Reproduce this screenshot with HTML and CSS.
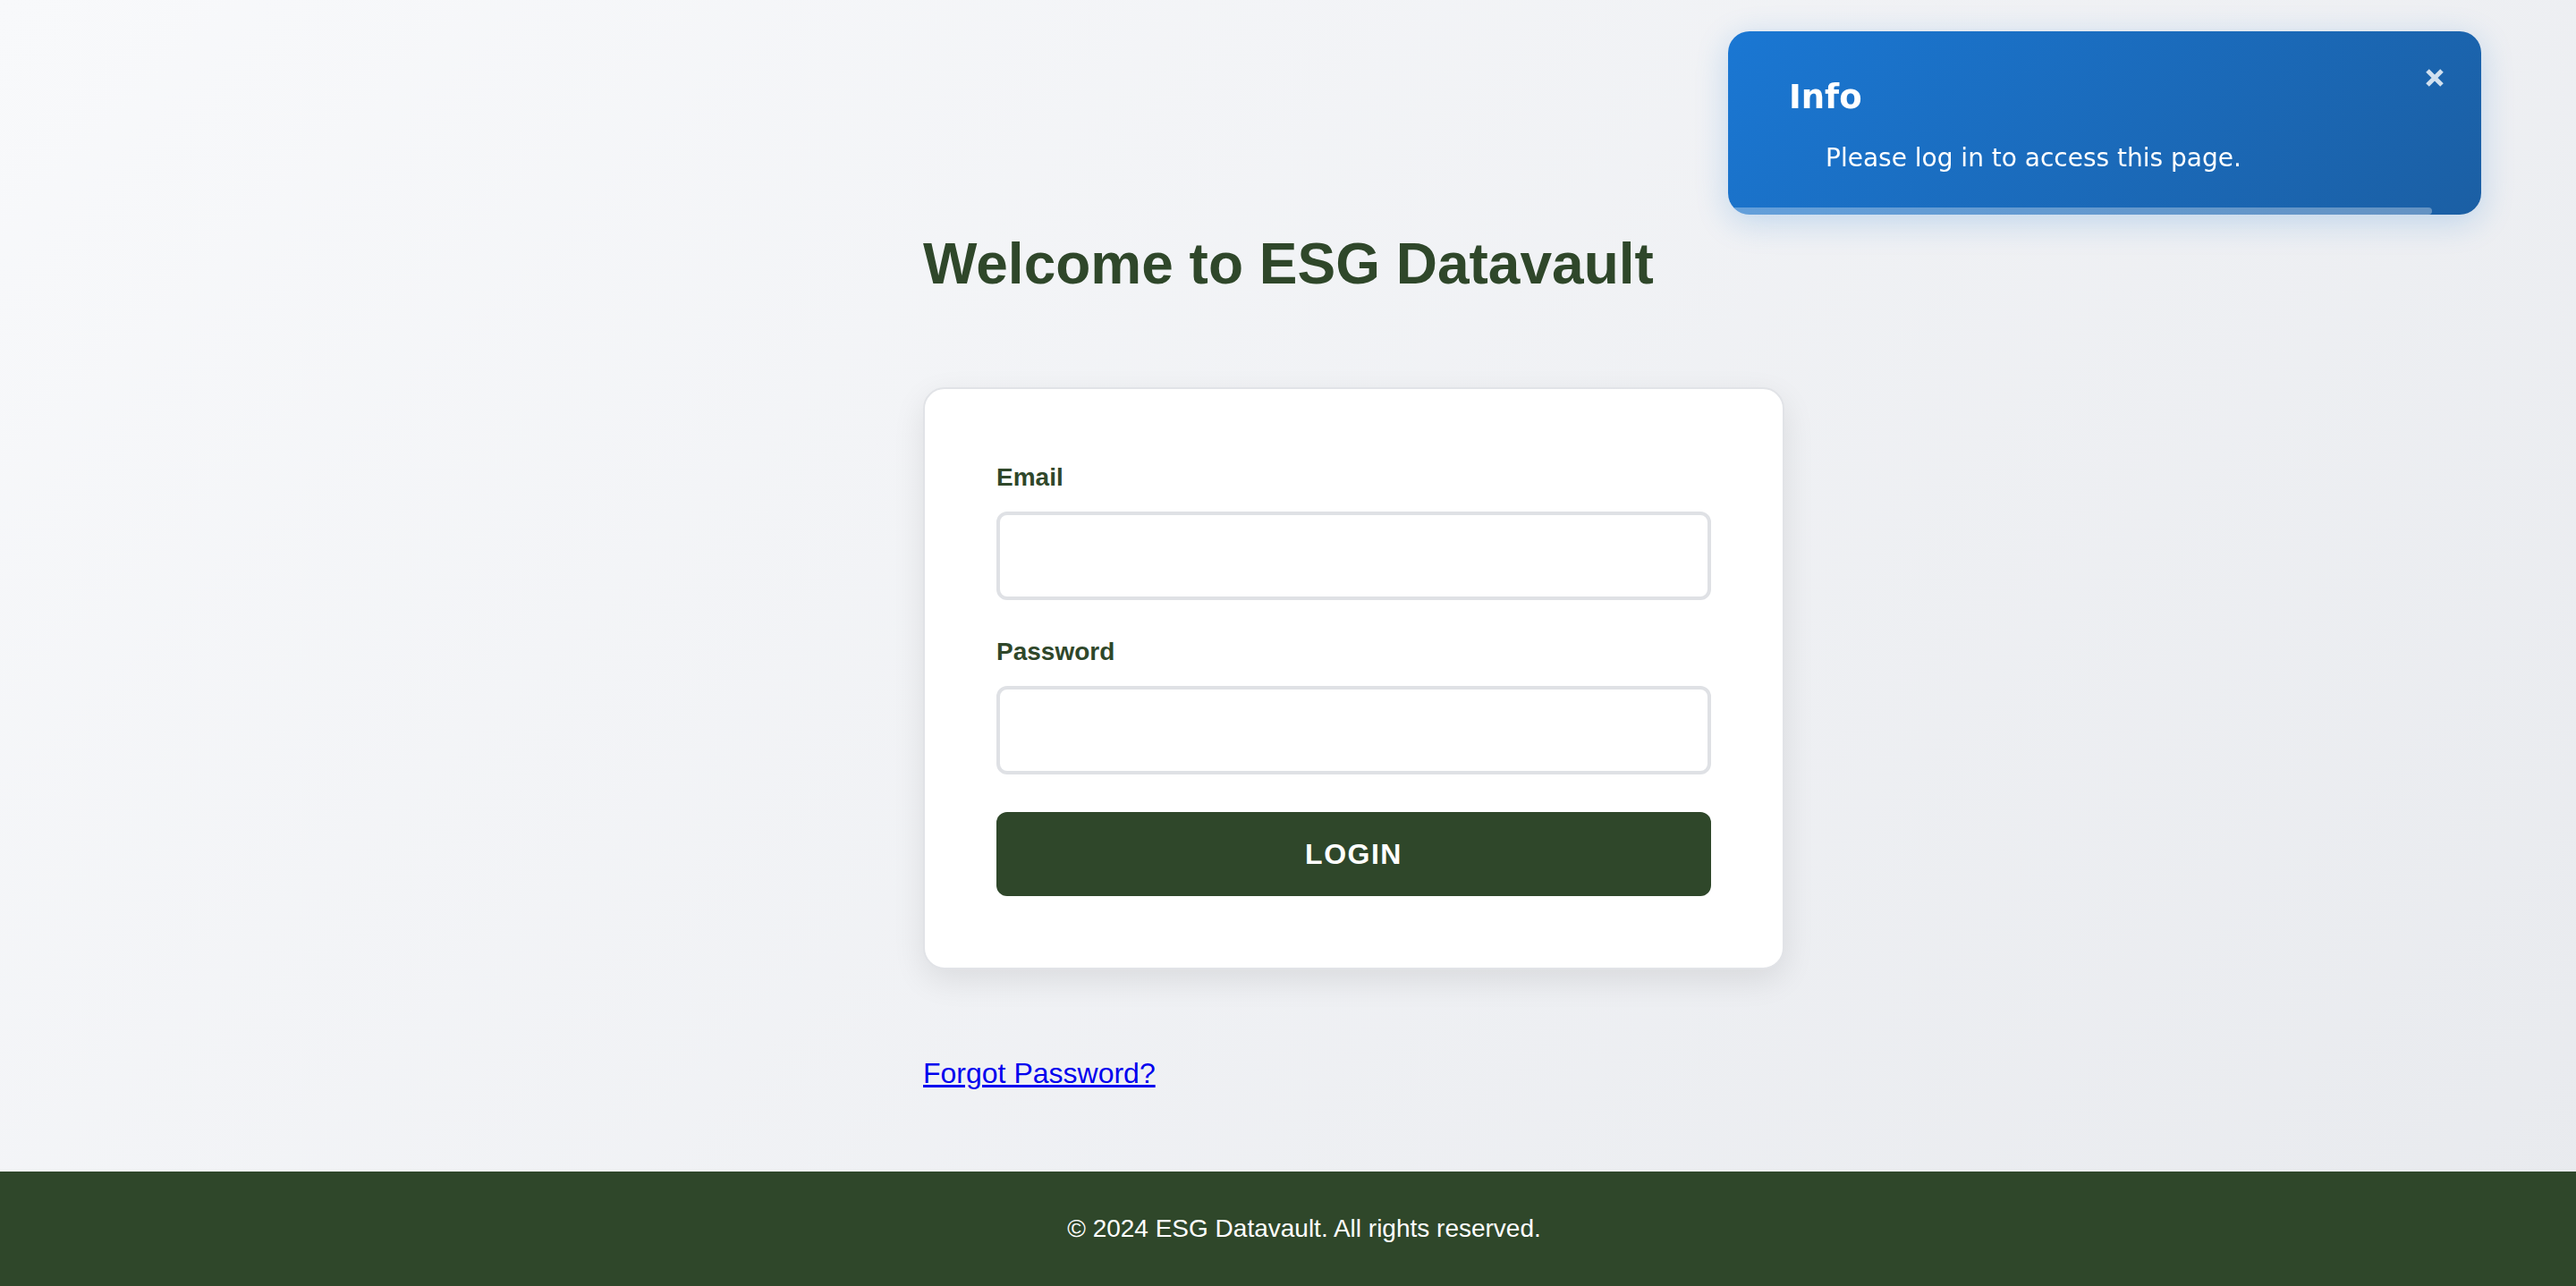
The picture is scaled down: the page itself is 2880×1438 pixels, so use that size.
FILE: index.html
```html
<!DOCTYPE html>
<html lang="en">
<head>
<meta charset="utf-8">
<title>ESG Datavault - Login</title>
<link rel="stylesheet" href="styles.css">
</head>
<body>
<main class="main">
  <div class="container">
    <h1 class="title">Welcome to ESG Datavault</h1>
    <form class="card">
      <label class="label" for="email">Email</label>
      <input class="input" id="email" type="email">
      <label class="label" for="password">Password</label>
      <input class="input" id="password" type="password">
      <button class="btn" type="button">LOGIN</button>
    </form>
    <p class="forgot"><a href="#">Forgot Password?</a></p>
  </div>
</main>
<footer class="footer">© 2024 ESG Datavault. All rights reserved.</footer>

<div class="toast">
  <div class="toast-title">Info</div>
  <div class="toast-msg">Please log in to access this page.</div>
  <svg class="toast-close" width="22" height="22" viewBox="0 0 22 22" aria-label="close">
    <path d="M3 3 L19 19 M19 3 L3 19" stroke="currentColor" stroke-width="5" stroke-linecap="butt"/>
  </svg>
  <div class="toast-progress"></div>
</div>
</body>
</html>
```

FILE: styles.css
```css
html, body {
  margin: 0;
  padding: 0;
}
body {
  min-height: 100vh;
  display: flex;
  flex-direction: column;
  font-family: "Liberation Sans", Arial, sans-serif;
  background: linear-gradient(135deg, #f8f9fb 0%, #e8eaee 100%);
}
.main {
  flex: 1;
  padding-top: 258px;
}
.container {
  margin-left: 1032px;
  width: 964px;
}
.title {
  margin: 0;
  font-size: 64px;
  font-weight: 700;
  color: #2f472a;
  line-height: 74px;
}
.card {
  margin-top: 101px;
  box-sizing: border-box;
  width: 963px;
  padding: 83px 80px 80px 80px;
  background: #fff;
  border: 2px solid #e1e3e7;
  border-radius: 24px;
  box-shadow: 0 12px 36px rgba(0, 0, 0, 0.09);
  display: flex;
  flex-direction: column;
}
.label {
  font-size: 28px;
  line-height: 32px;
  font-weight: 700;
  color: #2f472a;
  margin-bottom: 22px;
}
.input {
  box-sizing: border-box;
  height: 99px;
  border: 4px solid #dfe1e5;
  border-radius: 12px;
  margin: 0 0 42px 0;
  font-size: 28px;
  padding: 0 20px;
  background: #fff;
}
.btn {
  height: 94px;
  border: none;
  border-radius: 12px;
  background: #2f472a;
  color: #fff;
  font-family: "Liberation Sans", Arial, sans-serif;
  font-size: 32px;
  font-weight: 700;
  letter-spacing: 1.5px;
}
.forgot {
  margin: 98px 0 0 0;
  font-size: 32px;
  line-height: 37px;
}
.forgot a {
  color: #0000ee;
}
.footer {
  height: 128px;
  box-sizing: border-box;
  background: #2f472a;
  color: #fff;
  font-size: 28px;
  line-height: 32px;
  display: flex;
  align-items: center;
  justify-content: center;
  padding-left: 36px;
}
.toast {
  position: fixed;
  top: 35px;
  right: 106px;
  width: 842px;
  height: 205px;
  box-sizing: border-box;
  padding: 70px 68px 0 68px;
  border-radius: 24px;
  overflow: hidden;
  background: linear-gradient(135deg, #1a77d3 0%, #1b5fa4 100%);
  box-shadow: 0 8px 36px rgba(25, 118, 210, 0.22);
  color: #fff;
  font-family: "DejaVu Sans", Verdana, sans-serif;
}
.toast-title {
  font-size: 37px;
  font-weight: 700;
  line-height: 40px;
  margin-top: -16px;
}
.toast-msg {
  font-size: 28px;
  line-height: 34px;
  margin-top: 31px;
  margin-left: 41px;
}
.toast-close {
  position: absolute;
  top: 41px;
  right: 41px;
  color: rgba(255, 255, 255, 0.8);
}
.toast-progress {
  position: absolute;
  left: 0;
  bottom: 0;
  width: 787px;
  height: 8px;
  background: rgba(255, 255, 255, 0.32);
  border-radius: 0 4px 4px 0;
}
```
